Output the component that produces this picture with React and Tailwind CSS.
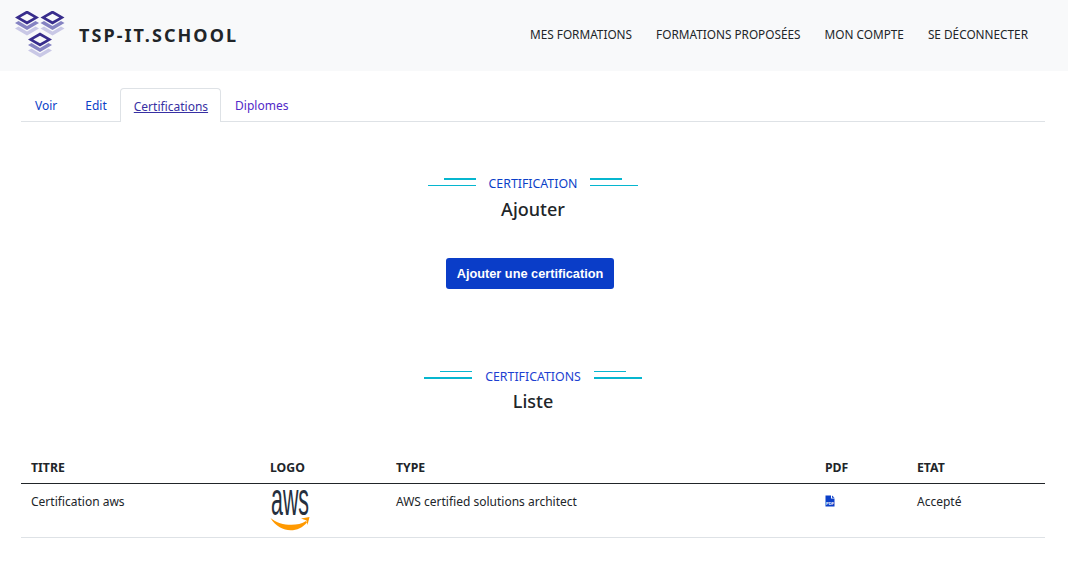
// one stack of three diamonds in the logo
function Stack({ x, y }) {
    return (
        <g transform={`translate(${x} ${y})`}>
            <path d="M-12 11 L0 18 L12 11 L8.5 9 L0 14 L-8.5 9 Z" fill="#c9c8e6" />
            <path d="M-12 5.5 L0 12.5 L12 5.5 L8.5 3.5 L0 8.5 L-8.5 3.5 Z" fill="#8583c2" />
            <path d="M0 -7 L12 0 L0 7 L-12 0 Z M0 -3.8 L-6.8 0 L0 3.8 L6.8 0 Z" fill="#382d8c" fillRule="evenodd" />
        </g>
    );
}

function Logo() {
    return (
        <svg width="50" height="50" viewBox="0 0 50 50" className="shrink-0">
            <Stack x={12} y={6.5} />
            <Stack x={37.5} y={6.5} />
            <Stack x={25} y={28.5} />
        </svg>
    );
}

// section title with the two cyan lines each side
function SectionTitle({ label, title, thickTop, labelClass, titleClass }) {
    const top = thickTop ? 'h-[2px]' : 'h-px';
    const bottom = thickTop ? 'h-px' : 'h-[2px]';
    return (
        <div className="flex flex-col items-center">
            <div className="flex items-center gap-[13px]">
                <div className="w-12 flex flex-col items-end gap-[5px] -mt-[5px]">
                    <div className={`w-8 bg-[#06b6cf] ${top}`} />
                    <div className={`w-12 bg-[#06b6cf] ${bottom}`} />
                </div>
                <span className={`text-[12.35px] leading-5 ${labelClass}`}>{label}</span>
                <div className="w-12 flex flex-col items-start gap-[5px] -mt-[5px]">
                    <div className={`w-8 bg-[#06b6cf] ${top}`} />
                    <div className={`w-12 bg-[#06b6cf] ${bottom}`} />
                </div>
            </div>
            <h2 className={`text-[18px] leading-6 font-medium text-[#212529] ${titleClass}`}>{title}</h2>
        </div>
    );
}

function AwsLogo() {
    return (
        <svg width="42" height="46" viewBox="0 0 42 46" className="block overflow-visible">
            <text x="1" y="27" fontFamily="'Liberation Sans', sans-serif" fontSize="46" fill="#252f3e" textLength="38" lengthAdjust="spacingAndGlyphs">aws</text>
            <path d="M0.5 30 C10 38 27 39 36 33 L37 34.5 C28 45.5 10 45.5 0.5 30 Z" fill="#f90" />
            <path d="M31 30.5 L39.5 29 L37.5 37 L36.5 32.5 Z" fill="#f90" />
        </svg>
    );
}

function PdfIcon() {
    return (
        <svg width="10" height="12" viewBox="0 0 10 12" className="block">
            <path d="M0.5 0.5 H6 V3.5 H9.5 V11.5 H0.5 Z M7 0.5 L9.5 2.7 H7 Z" fill="#0b3fc8" />
            <text x="5" y="9.5" textAnchor="middle" fontFamily="'Liberation Sans', sans-serif" fontSize="4" fontWeight="700" fill="#fff">PDF</text>
        </svg>
    );
}

export default function App() {
    return (
        <div className="min-h-[563px] bg-white font-['Noto_Sans',sans-serif] text-[12px] text-[#212529]">
            {/* Navbar */}
            <header className="h-[71px] bg-[#f8f9fa] flex items-center justify-between pl-[15px] pr-10">
                <div className="flex items-center gap-[14px]">
                    <Logo />
                    <span className="text-[18px] font-bold tracking-[2.05px] text-[#212529]">TSP-IT.SCHOOL</span>
                </div>
                <nav className="flex items-center gap-6 pb-[2px] text-[11.8px] text-[#212529]">
                    <a>MES FORMATIONS</a>
                    <a>FORMATIONS PROPOSÉES</a>
                    <a>MON COMPTE</a>
                    <a>SE DÉCONNECTER</a>
                </nav>
            </header>

            <main className="mx-[21px] w-[1024px]">
                {/* Tabs */}
                <div className="flex items-end h-[34px] mt-[17px] border-b border-[#dee2e6]">
                    <a className="h-[34px] px-[14px] pt-[3px] flex items-center text-[#0b3fc8]">Voir</a>
                    <a className="h-[34px] pl-[14px] pr-[13px] pt-[3px] flex items-center text-[#0b3fc8]">Edit</a>
                    <a className="h-[34px] -mb-px pl-[13px] pr-[12px] pt-[2px] flex items-center bg-white border border-b-0 border-[#dee2e6] rounded-t-[4px] text-[#3730a3] underline">Certifications</a>
                    <a className="h-[34px] px-[14px] pt-[3px] flex items-center text-[#5229c8]">Diplomes</a>
                </div>

                <section className="mt-[52px] flex flex-col items-center">
                    <SectionTitle label="CERTIFICATION" title="Ajouter" thickTop labelClass="text-[#0b3fc8]" titleClass="mt-[3px]" />
                    <button className="mt-[37px] mr-[6px] w-[168px] h-[31px] rounded-[3px] bg-[#0a3dc8] text-white text-[12.75px] font-bold font-['Liberation_Sans',sans-serif]">
                        Ajouter une certification
                    </button>
                </section>

                <section className="mt-[78px] flex flex-col items-center">
                    <SectionTitle label="CERTIFICATIONS" title="Liste" labelClass="text-[#1d3fd1]" titleClass="mt-[2px]" />
                </section>

                {/* Table */}
                <table className="w-full mt-[39px] table-fixed border-collapse">
                    <thead>
                        <tr className="border-b border-[#212529] text-left text-[12.25px]">
                            <th className="w-[239px] h-[31px] pl-[10px] pt-px font-bold">TITRE</th>
                            <th className="w-[126px] pl-[10px] pt-px font-bold">LOGO</th>
                            <th className="w-[429px] pl-[10px] pt-px font-bold">TYPE</th>
                            <th className="w-[92px] pl-[10px] pt-px font-bold">PDF</th>
                            <th className="pl-[10px] pt-px font-bold">ETAT</th>
                        </tr>
                    </thead>
                    <tbody>
                        <tr className="border-b border-[#dee2e6] align-top">
                            <td className="pl-[10px] pt-[9px]">Certification aws</td>
                            <td className="pl-[10px] pt-[4px] h-[54px]"><AwsLogo /></td>
                            <td className="pl-[10px] pt-[9px]">AWS certified solutions architect</td>
                            <td className="pl-[10px] pt-[11px]"><PdfIcon /></td>
                            <td className="pl-[10px] pt-[9px]">Accepté</td>
                        </tr>
                    </tbody>
                </table>
            </main>
        </div>
    );
}
